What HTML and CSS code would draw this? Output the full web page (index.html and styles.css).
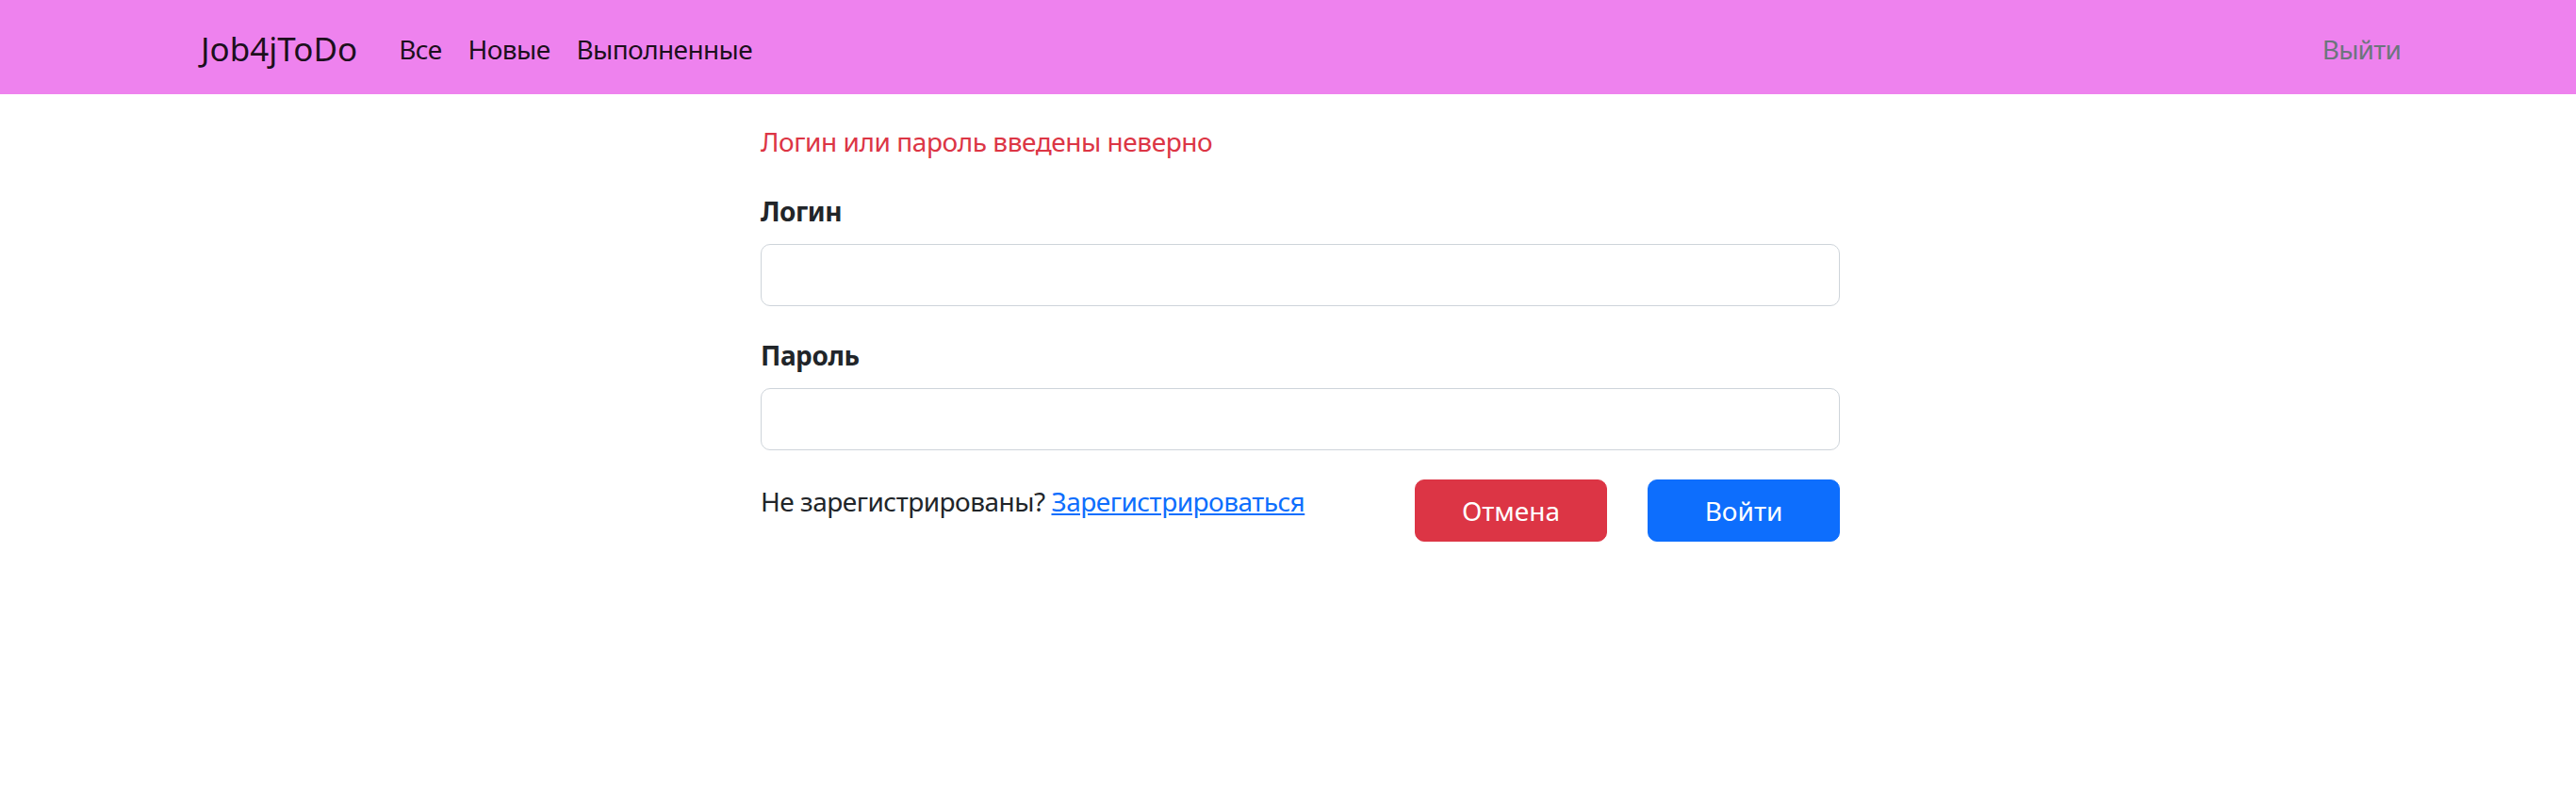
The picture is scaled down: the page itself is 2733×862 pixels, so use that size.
FILE: index.html
```html
<!DOCTYPE html>
<html lang="ru">
<head>
<meta charset="utf-8">
<title>Job4jToDo</title>
<link rel="stylesheet" href="styles.css">
</head>
<body>
<nav class="navbar">
  <a class="brand" href="#">Job4jToDo</a>
  <ul class="nav-links">
    <li><a href="#">Все</a></li>
    <li><a href="#">Новые</a></li>
    <li><a href="#">Выполненные</a></li>
  </ul>
  <a class="logout" href="#">Выйти</a>
</nav>
<main class="content">
  <div class="error">Логин или пароль введены неверно</div>
  <form class="login-form">
    <div class="field">
      <label class="label" for="login">Логин</label>
      <input class="input" id="login" type="text">
    </div>
    <div class="field">
      <label class="label" for="password">Пароль</label>
      <input class="input" id="password" type="password">
    </div>
    <div class="actions">
      <div class="register">Не зарегистрированы? <a href="#">Зарегистрироваться</a></div>
      <div class="buttons">
        <button type="button" class="btn btn-cancel">Отмена</button>
        <button type="submit" class="btn btn-login">Войти</button>
      </div>
    </div>
  </form>
</main>
</body>
</html>
```
FILE: styles.css
```css
* { box-sizing: border-box; }
html, body { margin: 0; padding: 0; }
body {
  font-family: "Noto Sans", "Open Sans", sans-serif;
  font-size: 28px;
  letter-spacing: -0.45px;
  color: #212529;
  background: #fff;
}
a { text-decoration: none; }

.navbar {
  height: 100px;
  background: #ee82ee;
  display: flex;
  align-items: center;
  padding: 3px 186px 0 213px;
}
.brand {
  font-size: 35px;
  letter-spacing: 0;
  color: rgba(0,0,0,0.9);
  line-height: 1;
  margin-right: 30px;
}
.nav-links {
  display: flex;
  list-style: none;
  margin: 0;
  padding: 0;
}
.nav-links a {
  display: block;
  padding: 0 14px;
  letter-spacing: -0.6px;
  color: rgba(0,0,0,0.9);
  line-height: 1;
}
.logout {
  margin-left: auto;
  color: #6c757d;
  letter-spacing: -0.8px;
  line-height: 1;
}

.content {
  width: 1145px;
  margin-left: 807px;
  padding-top: 29px;
}
.error {
  color: #dc3545;
  line-height: 42px;
}
.login-form { margin-top: 32px; }
.field { margin-bottom: 31px; }
.label {
  display: block;
  font-weight: 700;
  line-height: 42px;
  margin-bottom: 14px;
}
.input {
  display: block;
  width: 100%;
  height: 66px;
  border: 1px solid #ced4da;
  border-radius: 10px;
  background: #fff;
  font: inherit;
  padding: 0 21px;
}
.actions {
  display: flex;
  justify-content: space-between;
  align-items: flex-start;
}
.register {
  line-height: 42px;
  margin-top: 2px;
  letter-spacing: -0.5px;
}
.register a {
  color: #0d6efd;
  text-decoration: underline;
}
.buttons {
  display: flex;
  gap: 43px;
}
.btn {
  width: 204px;
  height: 66px;
  border: 1px solid transparent;
  border-radius: 10px;
  color: #fff;
  font: inherit;
  line-height: 1;
  padding: 0;
}
.btn-cancel { background: #dc3545; border-color: #dc3545; }
.btn-login { background: #0d6efd; border-color: #0d6efd; }
```
